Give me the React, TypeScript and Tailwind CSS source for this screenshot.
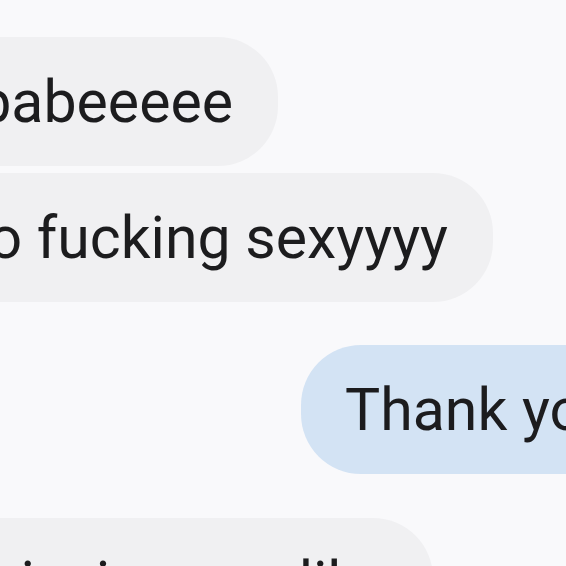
import React from 'react';

interface BubbleProps {
  text: string;
  outgoing?: boolean;
}

function Bubble({ text, outgoing }: BubbleProps) {
  return (
    <div
      className={
        outgoing
          ? 'h-[129px] shrink-0 flex items-center whitespace-nowrap rounded-l-[60px] bg-[#d3e3f4] pl-[44px] pr-[60px]'
          : 'h-[129px] shrink-0 flex items-center whitespace-nowrap rounded-r-[60px] bg-[#f0f0f2] pr-[45px] pl-[60px]'
      }
    >
      <span className="text-[59px] leading-none text-[#1c1c1e]">{text}</span>
    </div>
  );
}

export default function App() {
  return (
    <div
      className="w-[566px] h-[566px] overflow-hidden bg-[#f9f9fb] flex flex-col pt-[37px]"
      style={{ fontFamily: 'Roboto, "Noto Sans", sans-serif' }}
    >
      <div className="w-[278px] flex justify-end">
        <Bubble text="Hi babeeeee" />
      </div>
      <div className="w-[493px] flex justify-end mt-[7px]">
        <Bubble text="You look so fucking sexyyyy" />
      </div>
      <div className="pl-[301px] flex mt-[43px]">
        <Bubble text="Thank you babe" outgoing />
      </div>
      <div className="w-[433px] flex justify-end mt-[44px]">
        <Bubble text="Stop missing you like" />
      </div>
    </div>
  );
}
